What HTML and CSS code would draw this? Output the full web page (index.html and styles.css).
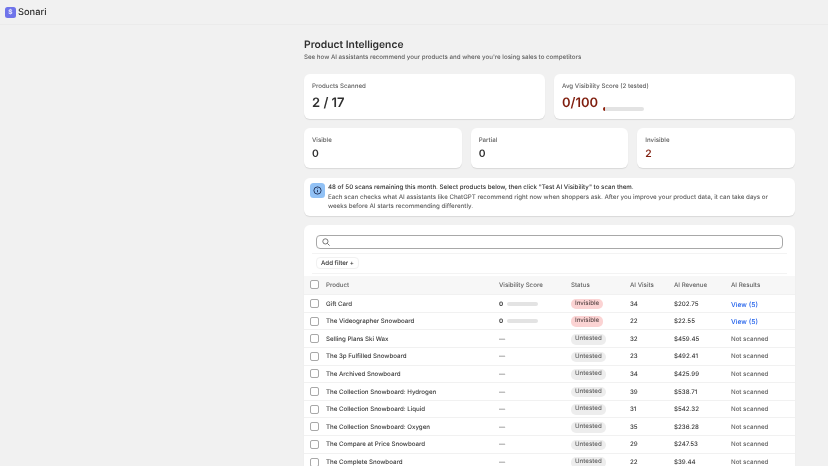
FILE: index.html
```html
<!DOCTYPE html>
<html lang="en">
<head>
<meta charset="utf-8">
<title>Sonari</title>
<link rel="stylesheet" href="styles.css">
</head>
<body>
<header class="topbar">
  <span class="logo"><span class="logo-s">$</span></span>
  <span class="brand">Sonari</span>
</header>
<main class="page">
  <h1 class="title">Product Intelligence</h1>
  <p class="subtitle">See how AI assistants recommend your products and where you're losing sales to competitors</p>

  <section class="grid-two">
    <div class="card big">
      <div class="label">Products Scanned</div>
      <div class="value-lg">2 / 17</div>
    </div>
    <div class="card big">
      <div class="label">Avg Visibility Score (2 tested)</div>
      <div class="score-row">
        <span class="value-lg red">0/100</span>
        <span class="bar"><span class="bar-fill"></span></span>
      </div>
    </div>
  </section>

  <section class="grid-three">
    <div class="card small">
      <div class="label">Visible</div>
      <div class="value-md">0</div>
    </div>
    <div class="card small">
      <div class="label">Partial</div>
      <div class="value-md">0</div>
    </div>
    <div class="card small">
      <div class="label">Invisible</div>
      <div class="value-md red">2</div>
    </div>
  </section>

  <section class="card info">
    <span class="info-icon">
      <svg width="9" height="9" viewBox="0 0 20 20" fill="none" stroke="#1f2f55" stroke-width="2">
        <circle cx="10" cy="10" r="8"/>
        <path d="M10 9v5M10 5.5v1.5"/>
      </svg>
    </span>
    <div class="info-text">
      <div class="info-main">48 of 50 scans remaining this month. Select products below, then click "Test AI Visibility" to scan them.</div>
      <div class="info-sub">Each scan checks what AI assistants like ChatGPT recommend right now when shoppers ask. After you improve your product data, it can take days or weeks before AI starts recommending differently.</div>
    </div>
  </section>

  <section class="card table-card">
    <div class="search-wrap">
      <div class="search">
        <svg width="8" height="8" viewBox="0 0 20 20" fill="none" stroke="#555" stroke-width="2">
          <circle cx="8.5" cy="8.5" r="6.5"/>
          <path d="M13.5 13.5 19 19"/>
        </svg>
      </div>
    </div>
    <div class="filter-row"><span class="filter">Add filter +</span></div>
    <table class="products">
      <thead>
        <tr>
          <th class="c-check"><span class="check"></span></th>
          <th class="c-name">Product</th>
          <th class="c-score">Visibility Score</th>
          <th class="c-status">Status</th>
          <th class="c-visits">AI Visits</th>
          <th class="c-rev">AI Revenue</th>
          <th>AI Results</th>
        </tr>
      </thead>
      <tbody>
        <tr><td class="c-check"><span class="check"></span></td><td>Gift Card</td><td><span class="zero">0</span><span class="mini-bar"></span></td><td><span class="badge bad">Invisible</span></td><td>34</td><td>$202.75</td><td><a class="view" href="#">View (5)</a></td></tr>
        <tr><td class="c-check"><span class="check"></span></td><td>The Videographer Snowboard</td><td><span class="zero">0</span><span class="mini-bar"></span></td><td><span class="badge bad">Invisible</span></td><td>22</td><td>$22.55</td><td><a class="view" href="#">View (5)</a></td></tr>
        <tr><td class="c-check"><span class="check"></span></td><td>Selling Plans Ski Wax</td><td class="dash">—</td><td><span class="badge">Untested</span></td><td>32</td><td>$459.45</td><td class="muted">Not scanned</td></tr>
        <tr><td class="c-check"><span class="check"></span></td><td>The 3p Fulfilled Snowboard</td><td class="dash">—</td><td><span class="badge">Untested</span></td><td>23</td><td>$492.41</td><td class="muted">Not scanned</td></tr>
        <tr><td class="c-check"><span class="check"></span></td><td>The Archived Snowboard</td><td class="dash">—</td><td><span class="badge">Untested</span></td><td>34</td><td>$425.99</td><td class="muted">Not scanned</td></tr>
        <tr><td class="c-check"><span class="check"></span></td><td>The Collection Snowboard: Hydrogen</td><td class="dash">—</td><td><span class="badge">Untested</span></td><td>39</td><td>$538.71</td><td class="muted">Not scanned</td></tr>
        <tr><td class="c-check"><span class="check"></span></td><td>The Collection Snowboard: Liquid</td><td class="dash">—</td><td><span class="badge">Untested</span></td><td>31</td><td>$542.32</td><td class="muted">Not scanned</td></tr>
        <tr><td class="c-check"><span class="check"></span></td><td>The Collection Snowboard: Oxygen</td><td class="dash">—</td><td><span class="badge">Untested</span></td><td>35</td><td>$236.28</td><td class="muted">Not scanned</td></tr>
        <tr><td class="c-check"><span class="check"></span></td><td>The Compare at Price Snowboard</td><td class="dash">—</td><td><span class="badge">Untested</span></td><td>29</td><td>$247.53</td><td class="muted">Not scanned</td></tr>
        <tr><td class="c-check"><span class="check"></span></td><td>The Complete Snowboard</td><td class="dash">—</td><td><span class="badge">Untested</span></td><td>22</td><td>$39.44</td><td class="muted">Not scanned</td></tr>
      </tbody>
    </table>
  </section>
</main>
</body>
</html>
```
FILE: styles.css
```css
* { box-sizing: border-box; }
html, body { margin: 0; height: 466px; overflow: hidden; }
body {
  background: #f1f1f1;
  font-family: Inter, "Liberation Sans", sans-serif;
  color: #303030;
  font-size: 6.16px;
  font-weight: 450;
  text-rendering: geometricPrecision;
}
.topbar {
  height: 25px;
  display: flex;
  align-items: center;
  gap: 2px;
  padding-left: 5px;
  border-bottom: 1px solid #ebebeb;
  will-change: transform;
}
.logo {
  width: 11px;
  height: 11px;
  border-radius: 2.5px;
  background: #6f74ea;
  display: flex;
  align-items: center;
  justify-content: center;
}
.logo-s { color: #e6e8ff; font-size: 6.5px; font-weight: 700; line-height: 1; }
.brand { font-size: 9.3px; font-weight: 500; color: #303030; }
.page { width: 491px; margin-left: 304px; will-change: transform; }
.title {
  margin: 13px 0 0;
  font-size: 10.3px;
  line-height: 14px;
  font-weight: 600;
  color: #303030;
}
.subtitle {
  margin: 0;
  font-size: 6.16px;
  line-height: 11px;
  color: #616161;
}
.grid-two {
  margin-top: 11px;
  display: grid;
  grid-template-columns: 1fr 1fr;
  gap: 9px;
}
.grid-three {
  margin-top: 9px;
  display: grid;
  grid-template-columns: 1fr 1fr 1fr;
  gap: 9px;
}
.card {
  background: #fff;
  border-radius: 6px;
  box-shadow: 0 1px 1px rgba(0,0,0,.1);
}
.big { height: 45px; padding: 8px 8px 0; }
.small { height: 40px; padding: 8px 8px 0; }
.label { font-size: 6.16px; line-height: 10px; color: #616161; }
.value-lg { font-size: 13px; line-height: 14px; font-weight: 600; margin-top: 3.5px; color: #303030; }
.value-lg.red { color: #7f1d0d; }
.value-md { font-size: 10.3px; line-height: 12px; font-weight: 600; margin-top: 2px; color: #303030; }
.value-md.red { color: #7f1d0d; }
.score-row { display: flex; align-items: flex-end; gap: 5px; }
.bar { width: 41px; height: 4px; background: #e3e3e3; border-radius: 2px; margin-bottom: -1.5px; overflow: hidden; display: block; }
.bar-fill { display: block; width: 1.5px; height: 4px; background: #8e1f0b; }
.info {
  margin-top: 10px;
  height: 38px;
  padding: 5px 8px 0 6px;
  display: flex;
  gap: 3px;
}
.info-icon {
  width: 15px;
  height: 15px;
  border-radius: 3.5px;
  background: #91c1f5;
  display: flex;
  align-items: center;
  justify-content: center;
  flex: none;
}
.info-main { font-size: 6.19px; line-height: 10px; color: #303030; }
.info-sub { font-size: 6.16px; line-height: 9px; color: #616161; margin-top: -0.5px; }
.table-card { margin-top: 9px; height: 300px; overflow: hidden; }
.search-wrap { padding: 10px 12px 0; }
.search {
  height: 14px;
  border: 1px solid #a8a8a8;
  border-radius: 4px;
  display: flex;
  align-items: center;
  padding-left: 5px;
}
.filter-row {
  margin: 4px 8px 1.5px;
  padding: 3px 4px 4px;
  border-top: 1px solid #f3f3f3;
  border-bottom: 1px solid #f3f3f3;
  height: 21px;
}
.filter {
  display: block;
  width: 43px;
  height: 12px;
  line-height: 11px;
  text-align: center;
  border: 1px solid #f1f1f1;
  border-radius: 4px;
  font-size: 6.16px;
  color: #303030;
}
.products { width: 100%; border-collapse: collapse; table-layout: fixed; font-size: 6.16px; }
.products th {
  background: #f7f7f7;
  height: 19.3px;
  text-align: left;
  font-weight: 450;
  color: #616161;
  padding: 1px 0 0;
}
.products td {
  height: 17.6px;
  padding: 1px 0 0;
  border-top: 1px solid #f1f1f1;
  color: #3a3a3a;
}
.products td.c-check, .products th.c-check { width: 22px; padding: 0 0 0 6px; }
.c-name { width: 173px; }
.c-score { width: 72px; }
.c-status { width: 59px; }
.c-visits { width: 44px; }
.c-rev { width: 57px; }
.check {
  display: block;
  width: 9px;
  height: 9px;
  border: 1px solid #a8a8a8;
  border-radius: 2px;
  background: #fff;
}
.zero { font-weight: 700; display: inline-block; width: 8px; }
.mini-bar { display: inline-block; width: 31px; height: 4px; border-radius: 2px; background: #e3e3e3; vertical-align: 0; }
.products td.dash { color: #616161; }
.badge {
  display: inline-block;
  padding: 0 4px;
  line-height: 10.5px;
  border-radius: 5px;
  background: #ededed;
  color: #616161;
  font-size: 6.16px;
}
.badge.bad { background: #fbd3d3; color: #5c4a4a; }
.view { color: #2463eb; text-decoration: none; font-size: 6.75px; font-weight: 450; }
.products td.muted { color: #616161; }
```
